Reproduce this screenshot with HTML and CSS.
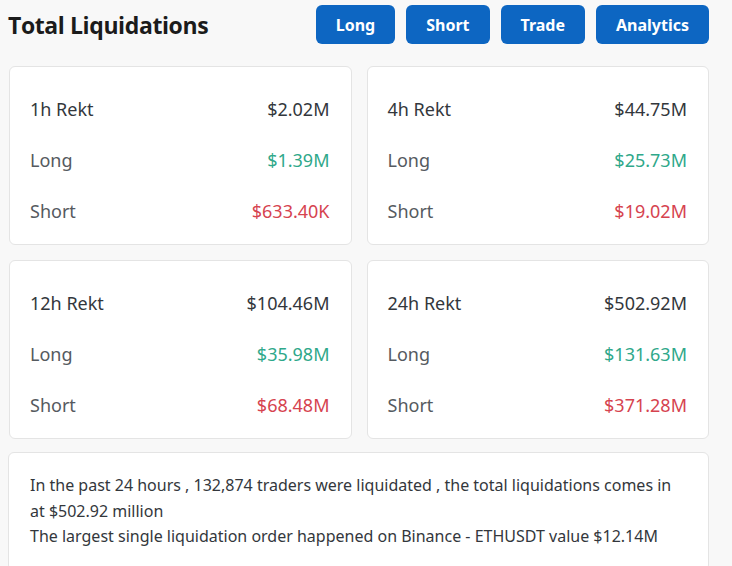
FILE: index.html
```html
<!DOCTYPE html>
<html>
<head>
<meta charset="utf-8">
<link rel="stylesheet" href="styles.css">
</head>
<body>
<div class="page">
  <header class="header">
    <h1 class="title">Total Liquidations</h1>
    <nav class="btns">
      <a class="btn">Long</a>
      <a class="btn">Short</a>
      <a class="btn">Trade</a>
      <a class="btn">Analytics</a>
    </nav>
  </header>
  <div class="grid">
    <div class="card">
      <div class="row head"><span>1h Rekt</span><span class="val">$2.02M</span></div>
      <div class="row"><span>Long</span><span class="val green">$1.39M</span></div>
      <div class="row"><span>Short</span><span class="val red">$633.40K</span></div>
    </div>
    <div class="card">
      <div class="row head"><span>4h Rekt</span><span class="val">$44.75M</span></div>
      <div class="row"><span>Long</span><span class="val green">$25.73M</span></div>
      <div class="row"><span>Short</span><span class="val red">$19.02M</span></div>
    </div>
    <div class="card">
      <div class="row head"><span>12h Rekt</span><span class="val">$104.46M</span></div>
      <div class="row"><span>Long</span><span class="val green">$35.98M</span></div>
      <div class="row"><span>Short</span><span class="val red">$68.48M</span></div>
    </div>
    <div class="card">
      <div class="row head"><span>24h Rekt</span><span class="val">$502.92M</span></div>
      <div class="row"><span>Long</span><span class="val green">$131.63M</span></div>
      <div class="row"><span>Short</span><span class="val red">$371.28M</span></div>
    </div>
  </div>
  <div class="summary">
    <p>In the past 24 hours , 132,874 traders were liquidated , the total liquidations comes in at $502.92 million</p>
    <p>The largest single liquidation order happened on Binance - ETHUSDT value $12.14M</p>
  </div>
</div>
</body>
</html>
```
FILE: styles.css
```css
html, body {
  margin: 0;
  padding: 0;
  background: #f8f8f8;
  height: 100%;
  overflow: hidden;
}
.page {
  padding: 5px 23px 0 8px;
  font-family: "Noto Sans", sans-serif;
}
.header {
  display: flex;
  justify-content: space-between;
  align-items: center;
  margin-bottom: 22px;
}
.title {
  margin: 0;
  font-family: "Open Sans", sans-serif;
  font-weight: 700;
  font-size: 23px;
  color: #1b1b1b;
  letter-spacing: -0.4px;
}
.btns {
  display: flex;
  gap: 11px;
}
.btn {
  display: flex;
  align-items: center;
  justify-content: center;
  height: 39px;
  padding: 0 20px;
  background: #0d66c2;
  color: #fff;
  border-radius: 6px;
  font-weight: 700;
  font-size: 16px;
  box-sizing: border-box;
}
.grid {
  display: grid;
  grid-template-columns: 1fr 1fr;
  gap: 15px;
  margin-left: 1px;
}
.card {
  background: #fff;
  border: 1px solid #e4e4e4;
  border-radius: 6px;
  padding: 16px 21px 8px 20px;
}
.row {
  display: flex;
  justify-content: space-between;
  align-items: center;
  height: 51px;
  font-size: 18px;
  color: #555a60;
}
.row.head {
  color: #33373c;
}
.val {
  color: #33373c;
}
.val.green { color: #2fa88a; }
.val.red { color: #d6434f; }
.summary {
  margin-top: 13px;
  background: #fff;
  border: 1px solid #e4e4e4;
  border-radius: 6px;
  padding: 20px 21px 20px 21px;
  font-size: 16px;
  line-height: 25.5px;
  color: #33373c;
}
.summary p {
  margin: 0;
}
```
